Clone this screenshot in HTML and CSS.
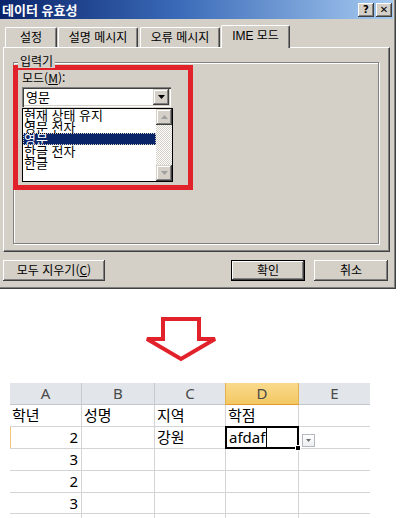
FILE: index.html
```html
<!DOCTYPE html>
<html lang="ko">
<head>
<meta charset="utf-8">
<link rel="stylesheet" href="styles.css">
</head>
<body>
<div class="dialog">
  <div class="titlebar">
    <span class="title">데이터 유효성</span>
    <span class="tbtns"><span class="tbtn">?</span><span class="tbtn">✕</span></span>
  </div>
  <div class="tabs">
    <div class="tab t1">설정</div>
    <div class="tab t2">설명 메시지</div>
    <div class="tab t3">오류 메시지</div>
    <div class="tab active">IME 모드</div>
  </div>
  <div class="panel">
    <div class="group">
      <span class="legend">입력기</span>
      <div class="redbox">
        <div class="lbl">모드(<u>M</u>):</div>
        <div class="combo">
          <span class="cval">영문</span>
          <span class="cbtn"><svg width="7" height="4" viewBox="0 0 7 4"><path d="M0 0H7L3.5 4Z" fill="#000"/></svg></span>
        </div>
        <div class="listbox">
          <ul class="items">
            <li>현재 상태 유지</li>
            <li>영문 전자</li>
            <li class="sel">영문</li>
            <li>한글 전자</li>
            <li>한글</li>
          </ul>
          <div class="sbar">
            <span class="sbtn"><svg width="7" height="4" viewBox="0 0 7 4"><path d="M0 4H7L3.5 0Z" fill="#a0a0a0"/></svg></span>
            <span class="strack"></span>
            <span class="sbtn"><svg width="7" height="4" viewBox="0 0 7 4"><path d="M0 0H7L3.5 4Z" fill="#a0a0a0"/></svg></span>
          </div>
        </div>
      </div>
    </div>
  </div>
  <div class="btnrow">
    <span class="btn clear">모두 지우기(<u>C</u>)</span>
    <span class="btn ok">확인</span>
    <span class="btn cancel">취소</span>
  </div>
</div>

<div class="arrowrow">
  <svg width="80" height="50" viewBox="0 0 80 50">
    <polygon points="22,4 58,4 58,24 74,24 40,44 6,24 22,24" fill="#fff" stroke="#e2222b" stroke-width="4" stroke-linejoin="miter" stroke-miterlimit="3"/>
  </svg>
</div>

<div class="sheet">
  <div class="hd">A</div><div class="hd">B</div><div class="hd">C</div><div class="hd hd-act">D</div><div class="hd last">E</div>

  <div class="c">학년</div><div class="c">성명</div><div class="c">지역</div><div class="c">학점</div><div class="c last"></div>

  <div class="c n rowact">2</div><div class="c"></div><div class="c">강원</div>
  <div class="c active"><span class="typed">afdaf</span><span class="fill"></span><span class="dd"><svg width="5" height="3" viewBox="0 0 5 3"><path d="M0 0H5L2.5 3Z" fill="#6b6b6b"/></svg></span></div>
  <div class="c last"></div>

  <div class="c n">3</div><div class="c"></div><div class="c"></div><div class="c"></div><div class="c last"></div>
  <div class="c n">2</div><div class="c"></div><div class="c"></div><div class="c"></div><div class="c last"></div>
  <div class="c n">3</div><div class="c"></div><div class="c"></div><div class="c"></div><div class="c last"></div>
  <div class="c"></div><div class="c"></div><div class="c"></div><div class="c"></div><div class="c last"></div>
</div>
</body>
</html>
```

FILE: styles.css
```css
html, body {
  margin: 0;
  padding: 0;
  background: #fff;
  width: 409px;
  height: 518px;
  overflow: hidden;
  font-family: "Noto Sans CJK KR", "Noto Sans", sans-serif;
}

/* ---------- dialog ---------- */
.dialog {
  width: 396px;
  height: 289px;
  box-sizing: border-box;
  background: #d4d0c8;
  border-right: 1px solid #404040;
  border-bottom: 1px solid #404040;
  box-shadow: inset -1px -1px 0 #808080;
  padding-right: 2px;
  font-size: 12px;
  color: #000;
}

.titlebar {
  height: 19px;
  display: flex;
  align-items: center;
  padding: 0 1px 0 2px;
  background: linear-gradient(to right, #0a246a 0%, #3a6ab8 45%, #a6caf0 100%);
}
.title {
  color: #fff;
  font-weight: bold;
  font-size: 13px;
  line-height: 15px;
}
.tbtns {
  margin-left: auto;
  display: flex;
  gap: 2px;
}
.tbtn {
  width: 16px;
  height: 14px;
  box-sizing: border-box;
  background: #d4d0c8;
  box-shadow: inset -1px -1px 0 #404040, inset 1px 1px 0 #fff, inset -2px -2px 0 #808080;
  font-family: "DejaVu Sans", sans-serif;
  font-weight: bold;
  font-size: 10px;
  line-height: 13px;
  text-align: center;
}

/* tabs */
.tabs {
  margin-top: 6px;
  height: 23px;
  display: flex;
  align-items: flex-end;
  padding-left: 5px;
  position: relative;
  z-index: 1;
}
.tab {
  height: 20px;
  margin-bottom: 1px;
  box-sizing: border-box;
  border-top: 1px solid #fff;
  border-left: 1px solid #fff;
  border-right: 1px solid #404040;
  box-shadow: inset -1px 0 0 #808080;
  border-radius: 2px 2px 0 0;
  text-align: center;
  line-height: 18px;
  font-size: 12px;
}
.t1 { width: 52px; }
.t2 { width: 80px; margin-left: 1px; }
.t3 { width: 80px; margin-left: 2px; }
.tab.active {
  width: 69px;
  margin-left: 1px;
  height: 23px;
  margin-bottom: 0;
  background: #d4d0c8;
  line-height: 20px;
  font-family: "Liberation Sans", "Noto Sans CJK KR", sans-serif;
}

/* panel */
.panel {
  margin: -1px 0 0 3px;
  width: 387px;
  height: 205px;
  box-sizing: border-box;
  border-top: 1px solid #fff;
  border-left: 1px solid #fff;
  border-right: 1px solid #404040;
  border-bottom: 1px solid #404040;
  box-shadow: inset -1px -1px 0 #808080;
  padding: 14px 0 0 9px;
}
.group {
  position: relative;
  width: 366px;
  height: 182px;
  box-sizing: border-box;
  border: 1px solid #808080;
  box-shadow: inset 1px 1px 0 #fff, 1px 1px 0 #fff;
}
.legend {
  position: absolute;
  top: -9px;
  left: 4px;
  padding: 0 2px;
  background: #d4d0c8;
  line-height: 14px;
  font-size: 12px;
}

.redbox {
  margin: 2px 0 0 -1px;
  width: 180px;
  height: 125px;
  box-sizing: border-box;
  border: 5px solid #e2222b;
  padding: 0 0 0 4px;
}
.lbl {
  line-height: 15px;
  font-size: 12px;
}
.combo {
  margin-top: 2px;
  width: 149px;
  height: 20px;
  box-sizing: border-box;
  background: #fff;
  box-shadow: inset 1px 1px 0 #808080, inset 2px 2px 0 #404040, inset -1px -1px 0 #fff, inset -2px -2px 0 #d4d0c8;
  display: flex;
  align-items: center;
  padding: 2px;
}
.cval {
  padding-left: 2px;
  font-size: 13px;
  line-height: 16px;
  flex: 1;
}
.cbtn {
  width: 16px;
  height: 16px;
  box-sizing: border-box;
  background: #d4d0c8;
  box-shadow: inset -1px -1px 0 #404040, inset 1px 1px 0 #d4d0c8, inset -2px -2px 0 #808080, inset 2px 2px 0 #fff;
  display: flex;
  align-items: center;
  justify-content: center;
}

.listbox {
  margin-top: 1px;
  width: 151px;
  height: 74px;
  box-sizing: border-box;
  border: 1px solid #000;
  background: #fff;
  display: flex;
}
.items {
  list-style: none;
  margin: 0;
  padding: 0;
  flex: 1;
  min-width: 0;
}
.items li {
  height: 12px;
  line-height: 12px;
  font-size: 13px;
  padding-left: 1px;
  white-space: nowrap;
}
.items li.sel {
  background: #0a246a;
  color: #fff;
  outline: 1px dotted #d4d0c8;
  outline-offset: -1px;
}
.sbar {
  width: 16px;
  display: flex;
  flex-direction: column;
}
.sbtn {
  width: 16px;
  height: 16px;
  box-sizing: border-box;
  background: #d4d0c8;
  box-shadow: inset -1px -1px 0 #404040, inset 1px 1px 0 #d4d0c8, inset -2px -2px 0 #808080, inset 2px 2px 0 #fff;
  display: flex;
  align-items: center;
  justify-content: center;
}
.strack {
  flex: 1;
  background: repeating-conic-gradient(#d4d0c8 0 25%, #fff 0 50%) 0 0 / 2px 2px;
}

/* buttons */
.btnrow {
  margin-top: 8px;
  display: flex;
  padding-left: 3px;
}
.btn {
  height: 21px;
  box-sizing: border-box;
  background: #d4d0c8;
  box-shadow: inset -1px -1px 0 #404040, inset 1px 1px 0 #fff, inset -2px -2px 0 #808080;
  text-align: center;
  line-height: 20px;
  font-size: 12px;
}
.clear { width: 102px; }
.ok {
  width: 74px;
  margin-left: auto;
  border: 1px solid #000;
  line-height: 18px;
}
.cancel {
  width: 74px;
  margin-left: 9px;
  margin-right: 5px;
}

/* ---------- arrow ---------- */
.arrowrow {
  margin: 26px 0 0 141px;
  height: 50px;
}
.arrowrow svg { display: block; }

/* ---------- sheet ---------- */
.sheet {
  margin: 18px 0 0 10px;
  display: grid;
  grid-template-columns: 72px 73px 71px 73px 71px;
  grid-template-rows: 22px 22px 22px 22px 22px 21px 10px;
}
.hd {
  background: #e2e5e9;
  border-right: 1px solid #c6cad0;
  border-bottom: 1px solid #c3c7cc;
  box-sizing: border-box;
  text-align: center;
  font-family: "Noto Sans", sans-serif;
  font-size: 15px;
  line-height: 21px;
  color: #4a4a4a;
}
.hd-act {
  background: linear-gradient(#f9da8c, #f3c863);
  border-right: 1px solid #e2b152;
  border-bottom: 1px solid #e29a2f;
  box-shadow: -1px 0 0 #e2b152;
}
.hd.last { border-right: none; }

.c {
  position: relative;
  box-sizing: border-box;
  border-right: 1px solid #d4d4d4;
  border-bottom: 1px solid #d4d4d4;
  font-size: 15px;
  line-height: 20px;
  padding-left: 2px;
  color: #000;
  white-space: nowrap;
}
.c.last { border-right: none; }
.c.n {
  text-align: right;
  padding: 0 3px 0 0;
  font-family: "Noto Sans", sans-serif;
}
.c.rowact { box-shadow: inset 1px 0 0 #f2c47c; }

.c.active::after {
  content: "";
  position: absolute;
  left: -1px;
  top: -1px;
  right: -1px;
  bottom: -1px;
  border: 2px solid #000;
  pointer-events: none;
}
.typed {
  font-family: "Noto Sans", sans-serif;
  font-size: 15px;
  padding-left: 1px;
  border-right: 1px solid #000;
  padding-right: 1px;
}
.fill {
  position: absolute;
  right: -3px;
  bottom: -3px;
  width: 5px;
  height: 5px;
  background: #000;
  border: 1px solid #fff;
  box-sizing: content-box;
  z-index: 2;
  width: 4px;
  height: 4px;
}
.dd {
  position: absolute;
  left: 76px;
  top: 7px;
  width: 13px;
  height: 13px;
  box-sizing: border-box;
  border: 1px solid #b4b8be;
  background: linear-gradient(#ffffff, #eceef1);
  display: flex;
  align-items: center;
  justify-content: center;
}
```
